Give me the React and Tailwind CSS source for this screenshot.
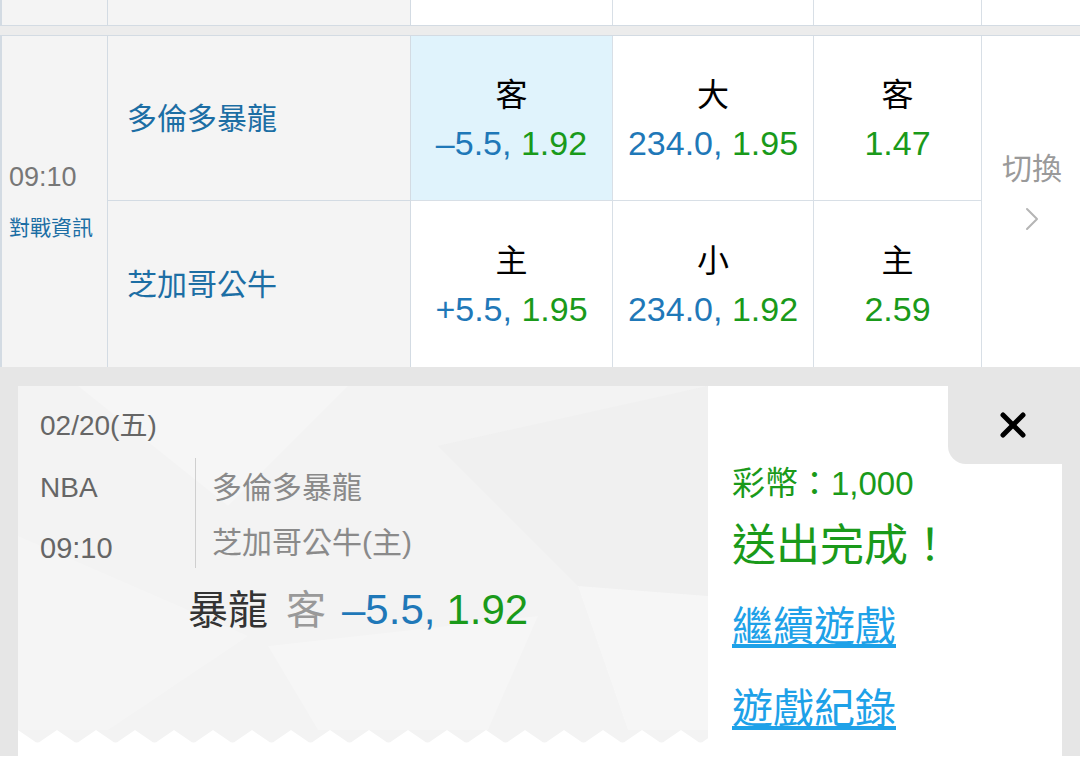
import { X, ChevronRight } from 'lucide-react'

const font = 'font-["Liberation_Sans","Noto_Sans_CJK_TC",sans-serif]'

const rows = [
  { team: '多倫多暴龍', odds: [
    { label: '客', a: '–5.5,', b: '1.92', active: true },
    { label: '大', a: '234.0,', b: '1.95' },
    { label: '客', b: '1.47' },
  ] },
  { team: '芝加哥公牛', odds: [
    { label: '主', a: '+5.5,', b: '1.95' },
    { label: '小', a: '234.0,', b: '1.92' },
    { label: '主', b: '2.59' },
  ] },
]

function OddsCell({ o, last }) {
  return (
    <div
      className={`flex flex-col items-center justify-center border-r border-[#d8dfe6] ${
        last ? '' : 'border-b'
      } ${o.active ? 'bg-[#e0f3fc]' : 'bg-white'}`}
    >
      <div className="text-[32px] leading-[50px] text-black">{o.label}</div>
      <div className="text-[34px] leading-[46px] whitespace-nowrap">
        {o.a && <span className="text-[#1f78b8]">{o.a} </span>}
        <span className="text-[#1a9a1a]">{o.b}</span>
      </div>
    </div>
  )
}

function Zigzag() {
  let d = 'M0 0'
  for (let x = 0; x < 690; x += 39) {
    d += ` L${x + 16} 11 Q${x + 19.5} 14 ${x + 23} 11 L${x + 39} 0`
  }
  d += ' Z'
  return (
    <svg width="690" height="14" className="block">
      <path d={d} fill="#f3f3f3" />
    </svg>
  )
}

export default function App() {
  return (
    <div className={`w-[1080px] h-[757px] overflow-hidden bg-white ${font}`}>
      {/* partial previous row */}
      <div className="grid grid-cols-[108px_303px_202px_201px_168px_98px] h-[26px] border-b border-[#d3dbe3]">
        <div className="bg-[#f4f4f4] border-l-2 border-r border-[#d3dbe3]" />
        <div className="bg-[#f4f4f4] border-r border-[#d3dbe3]" />
        <div className="border-r border-[#d8dfe6]" />
        <div className="border-r border-[#d8dfe6]" />
        <div className="border-r border-[#d8dfe6]" />
        <div />
      </div>
      <div className="h-[10px] bg-[#ececec] border-b border-[#d3dbe3]" />

      {/* match row */}
      <div className="grid grid-cols-[108px_303px_202px_201px_168px_98px] grid-rows-[165px_166px]">
        <div className="row-span-2 bg-[#f4f4f4] border-l-2 border-r border-[#d3dbe3] flex flex-col justify-center pl-[7px]">
          <div className="text-[27px] text-[#777] leading-[40px]">09:10</div>
          <div className="text-[21px] text-[#1c6ea4] leading-[36px] mt-[13px]">對戰資訊</div>
        </div>
        {rows.map((r, i) => (
          <div key={r.team} className="contents">
            <div
              className={`bg-[#f4f4f4] border-r border-[#d3dbe3] flex items-center pl-[19px] ${
                i === 0 ? 'border-b col-start-2 row-start-1' : 'col-start-2 row-start-2'
              }`}
            >
              <span className="text-[30px] text-[#1c6ea4]">{r.team}</span>
            </div>
            {r.odds.map((o, j) => (
              <div
                key={j}
                className={`grid ${i === 0 ? 'row-start-1' : 'row-start-2'} ${
                  j === 0 ? 'col-start-3' : j === 1 ? 'col-start-4' : 'col-start-5'
                }`}
              >
                <OddsCell o={o} last={i === 1} />
              </div>
            ))}
          </div>
        ))}
        <div className="row-span-2 col-start-6 row-start-1 flex flex-col items-center pl-[2px] pt-[113px]">
          <div className="text-[30px] text-[#9a9a9a] leading-[40px]">切換</div>
          <ChevronRight size={40} strokeWidth={1.2} className="text-[#b5b5b5] mt-[10px]" />
        </div>
      </div>

      {/* bet result panel */}
      <div className="h-[389px] bg-[#e6e6e6] px-[18px] pt-[19px] flex">
        <div className="w-[690px] bg-white flex flex-col">
          <div className="relative h-[344px] bg-[#f3f3f3] overflow-hidden">
            <svg className="absolute inset-0" width="690" height="344">
              <polygon points="60,0 330,0 210,120" fill="#ffffff" opacity="0.25" />
              <polygon points="0,150 230,250 90,344 0,344" fill="#ffffff" opacity="0.2" />
              <polygon points="420,60 690,0 690,210 560,200" fill="#eeeeee" opacity="0.5" />
              <polygon points="250,260 520,230 470,344 300,344" fill="#ffffff" opacity="0.25" />
              <polygon points="560,200 690,210 690,344 610,344" fill="#ffffff" opacity="0.3" />
            </svg>
            <div className="relative pl-[22px] pt-[20px]">
              <div className="text-[28px] text-[#666] leading-[40px]">02/20(五)</div>
              <div className="flex mt-[22px]">
                <div className="w-[155px] flex flex-col">
                  <div className="text-[28px] text-[#666] leading-[40px]">NBA</div>
                  <div className="text-[29px] text-[#666] leading-[40px] mt-[20px]">09:10</div>
                </div>
                <div className="border-l border-[#cfcfcf] pl-[16px] flex flex-col h-[110px] -mt-[10px]">
                  <div className="text-[30px] text-[#8a8a8a] leading-[40px] mt-[10px]">多倫多暴龍</div>
                  <div className="text-[30px] text-[#8a8a8a] leading-[40px] mt-[15px]">芝加哥公牛(主)</div>
                </div>
              </div>
              <div className="pl-[148px] mt-[16px] flex items-baseline whitespace-nowrap leading-[52px]">
                <span className="text-[40px] text-[#333]">暴龍</span>
                <span className="text-[40px] text-[#999] ml-[18px]">客</span>
                <span className="text-[42px] text-[#1f78b8] ml-[16px]">–5.5,</span>
                <span className="text-[42px] text-[#1a9a1a] ml-[11px]">1.92</span>
              </div>
            </div>
          </div>
          <Zigzag />
        </div>
        <div className="w-[354px] bg-white flex flex-col">
          <div className="flex justify-end">
            <div className="w-[114px] h-[78px] bg-[#e6e6e6] rounded-bl-[18px] flex items-center justify-center pl-[16px]">
              <X size={40} strokeWidth={3} className="text-black" />
            </div>
          </div>
          <div className="pl-[24px] flex flex-col">
            <div className="text-[33px] text-[#1a9a1a] leading-[40px]">彩幣：1,000</div>
            <div className="text-[44px] text-[#1a9a1a] leading-[56px] mt-[14px]">送出完成！</div>
            <a className="text-[41px] text-[#1ea1e8] underline leading-[52px] mt-[27px] w-fit">繼續遊戲</a>
            <a className="text-[41px] text-[#1ea1e8] underline leading-[52px] mt-[30px] w-fit">遊戲紀錄</a>
          </div>
        </div>
      </div>
    </div>
  )
}
